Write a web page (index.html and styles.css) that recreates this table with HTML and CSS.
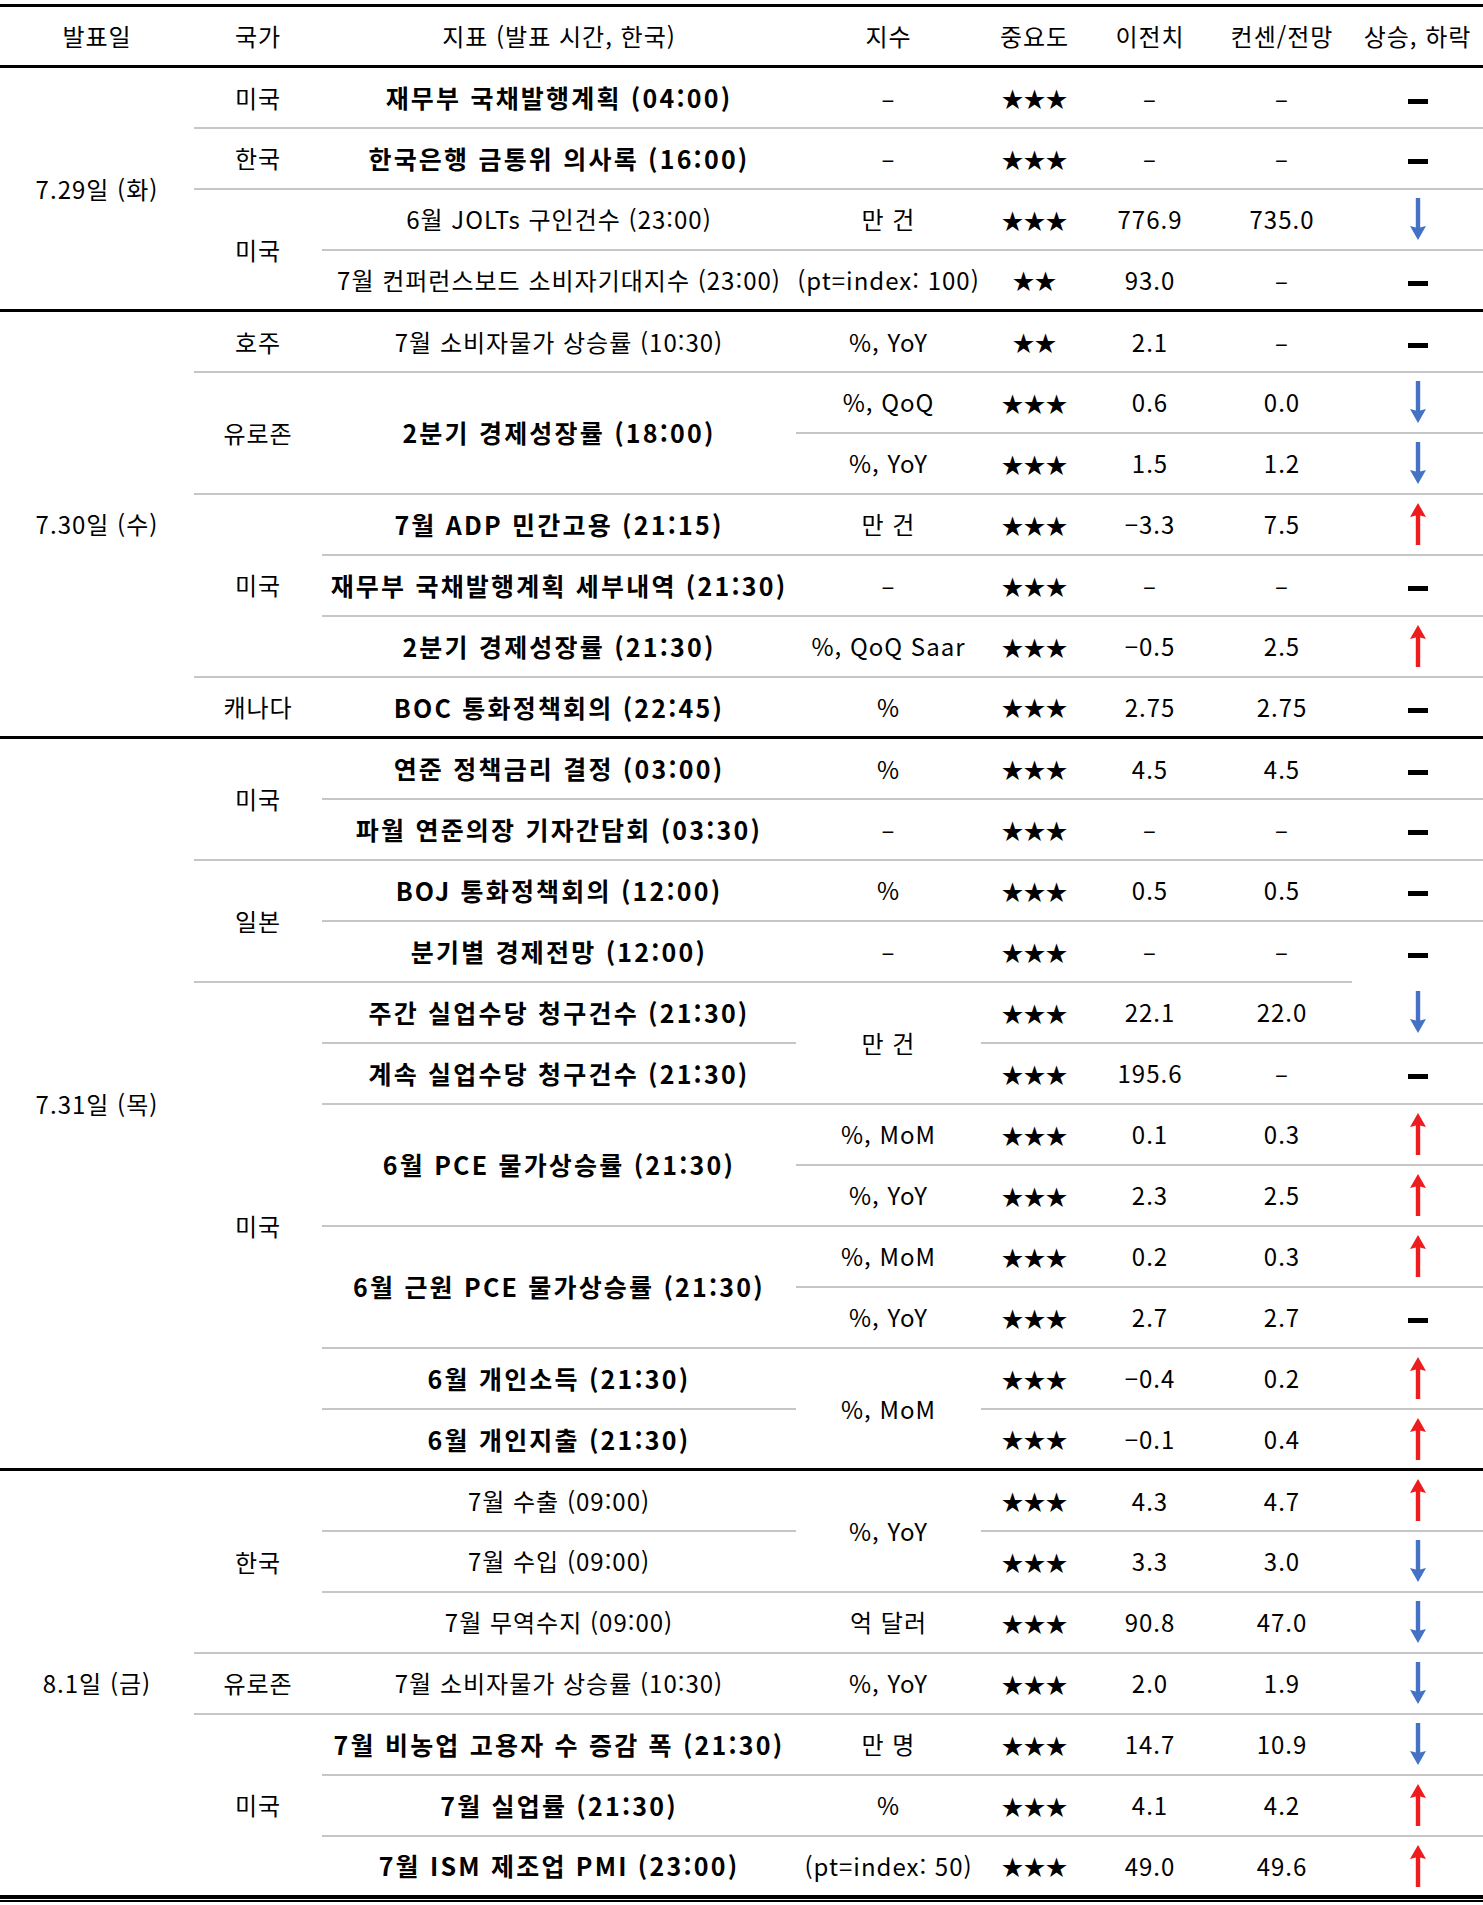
FILE: index.html
```html
<!DOCTYPE html>
<html lang="ko">
<head>
<meta charset="utf-8">
<title>주요 경제지표 발표 일정</title>
<link rel="stylesheet" href="styles.css">
</head>
<body>
<svg class="defs" width="0" height="0" aria-hidden="true">
  <defs>
    <symbol id="up" viewBox="0 0 18 42">
      <rect x="6.8" y="11" width="4.4" height="31" fill="#ee1c1c"/>
      <polygon points="9,0 17,14 9,12 1,14" fill="#ee1c1c"/>
    </symbol>
    <symbol id="down" viewBox="0 0 18 42">
      <rect x="6.8" y="0" width="4.4" height="31" fill="#4472c4"/>
      <polygon points="9,42 17,28 9,30 1,28" fill="#4472c4"/>
    </symbol>
  </defs>
</svg>
<div class="wrap">
<table class="cal">
  <colgroup>
    <col class="c-date"><col class="c-cty"><col class="c-ind"><col class="c-unit">
    <col class="c-imp"><col class="c-prev"><col class="c-cons"><col class="c-dir">
  </colgroup>
  <thead>
    <tr>
      <th>발표일</th><th>국가</th><th>지표 (발표 시간, 한국)</th><th>지수</th>
      <th>중요도</th><th>이전치</th><th>컨센/전망</th><th>상승, 하락</th>
    </tr>
  </thead>
  <tbody>
    <tr>
      <td rowspan="4">7.29일 (화)</td>
      <td>미국</td><td class="b">재무부 국채발행계획 (04:00)</td><td>–</td><td class="star">★★★</td><td>–</td><td>–</td><td><span class="flat"></span></td>
    </tr>
    <tr>
      <td>한국</td><td class="b">한국은행 금통위 의사록 (16:00)</td><td>–</td><td class="star">★★★</td><td>–</td><td>–</td><td><span class="flat"></span></td>
    </tr>
    <tr>
      <td rowspan="2">미국</td><td>6월 JOLTs 구인건수 (23:00)</td><td>만 건</td><td class="star">★★★</td><td>776.9</td><td>735.0</td><td><svg class="arr"><use href="#down"/></svg></td>
    </tr>
    <tr>
      <td>7월 컨퍼런스보드 소비자기대지수 (23:00)</td><td>(pt=index: 100)</td><td class="star">★★</td><td>93.0</td><td>–</td><td><span class="flat"></span></td>
    </tr>
  </tbody>
  <tbody>
    <tr>
      <td rowspan="7">7.30일 (수)</td>
      <td>호주</td><td>7월 소비자물가 상승률 (10:30)</td><td>%, YoY</td><td class="star">★★</td><td>2.1</td><td>–</td><td><span class="flat"></span></td>
    </tr>
    <tr>
      <td rowspan="2">유로존</td><td rowspan="2" class="b">2분기 경제성장률 (18:00)</td><td>%, QoQ</td><td class="star">★★★</td><td>0.6</td><td>0.0</td><td><svg class="arr"><use href="#down"/></svg></td>
    </tr>
    <tr>
      <td>%, YoY</td><td class="star">★★★</td><td>1.5</td><td>1.2</td><td><svg class="arr"><use href="#down"/></svg></td>
    </tr>
    <tr>
      <td rowspan="3">미국</td><td class="b">7월 ADP 민간고용 (21:15)</td><td>만 건</td><td class="star">★★★</td><td>−3.3</td><td>7.5</td><td><svg class="arr"><use href="#up"/></svg></td>
    </tr>
    <tr>
      <td class="b">재무부 국채발행계획 세부내역 (21:30)</td><td>–</td><td class="star">★★★</td><td>–</td><td>–</td><td><span class="flat"></span></td>
    </tr>
    <tr>
      <td class="b">2분기 경제성장률 (21:30)</td><td>%, QoQ Saar</td><td class="star">★★★</td><td>−0.5</td><td>2.5</td><td><svg class="arr"><use href="#up"/></svg></td>
    </tr>
    <tr>
      <td>캐나다</td><td class="b">BOC 통화정책회의 (22:45)</td><td>%</td><td class="star">★★★</td><td>2.75</td><td>2.75</td><td><span class="flat"></span></td>
    </tr>
  </tbody>
  <tbody>
    <tr>
      <td rowspan="12">7.31일 (목)</td>
      <td rowspan="2">미국</td><td class="b">연준 정책금리 결정 (03:00)</td><td>%</td><td class="star">★★★</td><td>4.5</td><td>4.5</td><td><span class="flat"></span></td>
    </tr>
    <tr>
      <td class="b">파월 연준의장 기자간담회 (03:30)</td><td>–</td><td class="star">★★★</td><td>–</td><td>–</td><td><span class="flat"></span></td>
    </tr>
    <tr>
      <td rowspan="2">일본</td><td class="b">BOJ 통화정책회의 (12:00)</td><td>%</td><td class="star">★★★</td><td>0.5</td><td>0.5</td><td><span class="flat"></span></td>
    </tr>
    <tr>
      <td class="b">분기별 경제전망 (12:00)</td><td>–</td><td class="star">★★★</td><td>–</td><td>–</td><td class="nob"><span class="flat"></span></td>
    </tr>
    <tr>
      <td rowspan="8">미국</td><td class="b">주간 실업수당 청구건수 (21:30)</td><td rowspan="2">만 건</td><td class="star">★★★</td><td>22.1</td><td>22.0</td><td><svg class="arr"><use href="#down"/></svg></td>
    </tr>
    <tr>
      <td class="b">계속 실업수당 청구건수 (21:30)</td><td class="star">★★★</td><td>195.6</td><td>–</td><td><span class="flat"></span></td>
    </tr>
    <tr>
      <td rowspan="2" class="b">6월 PCE 물가상승률 (21:30)</td><td>%, MoM</td><td class="star">★★★</td><td>0.1</td><td>0.3</td><td><svg class="arr"><use href="#up"/></svg></td>
    </tr>
    <tr>
      <td>%, YoY</td><td class="star">★★★</td><td>2.3</td><td>2.5</td><td><svg class="arr"><use href="#up"/></svg></td>
    </tr>
    <tr>
      <td rowspan="2" class="b">6월 근원 PCE 물가상승률 (21:30)</td><td>%, MoM</td><td class="star">★★★</td><td>0.2</td><td>0.3</td><td><svg class="arr"><use href="#up"/></svg></td>
    </tr>
    <tr>
      <td>%, YoY</td><td class="star">★★★</td><td>2.7</td><td>2.7</td><td><span class="flat"></span></td>
    </tr>
    <tr>
      <td class="b">6월 개인소득 (21:30)</td><td rowspan="2">%, MoM</td><td class="star">★★★</td><td>−0.4</td><td>0.2</td><td><svg class="arr"><use href="#up"/></svg></td>
    </tr>
    <tr>
      <td class="b">6월 개인지출 (21:30)</td><td class="star">★★★</td><td>−0.1</td><td>0.4</td><td><svg class="arr"><use href="#up"/></svg></td>
    </tr>
  </tbody>
  <tbody class="lastgrp">
    <tr>
      <td rowspan="7">8.1일 (금)</td>
      <td rowspan="3">한국</td><td>7월 수출 (09:00)</td><td rowspan="2">%, YoY</td><td class="star">★★★</td><td>4.3</td><td>4.7</td><td><svg class="arr"><use href="#up"/></svg></td>
    </tr>
    <tr>
      <td>7월 수입 (09:00)</td><td class="star">★★★</td><td>3.3</td><td>3.0</td><td><svg class="arr"><use href="#down"/></svg></td>
    </tr>
    <tr>
      <td>7월 무역수지 (09:00)</td><td>억 달러</td><td class="star">★★★</td><td>90.8</td><td>47.0</td><td><svg class="arr"><use href="#down"/></svg></td>
    </tr>
    <tr>
      <td>유로존</td><td>7월 소비자물가 상승률 (10:30)</td><td>%, YoY</td><td class="star">★★★</td><td>2.0</td><td>1.9</td><td><svg class="arr"><use href="#down"/></svg></td>
    </tr>
    <tr>
      <td rowspan="3">미국</td><td class="b">7월 비농업 고용자 수 증감 폭 (21:30)</td><td>만 명</td><td class="star">★★★</td><td>14.7</td><td>10.9</td><td><svg class="arr"><use href="#down"/></svg></td>
    </tr>
    <tr>
      <td class="b">7월 실업률 (21:30)</td><td>%</td><td class="star">★★★</td><td>4.1</td><td>4.2</td><td><svg class="arr"><use href="#up"/></svg></td>
    </tr>
    <tr>
      <td class="b">7월 ISM 제조업 PMI (23:00)</td><td>(pt=index: 50)</td><td class="star">★★★</td><td>49.0</td><td>49.6</td><td><svg class="arr"><use href="#up"/></svg></td>
    </tr>
  </tbody>
</table>
</div>
</body>
</html>
```

FILE: styles.css
```css
html, body {
  margin: 0;
  padding: 0;
  background: #ffffff;
}

.defs {
  position: absolute;
  width: 0;
  height: 0;
  overflow: hidden;
}

.wrap {
  width: 1483px;
  padding-top: 4px;
  padding-bottom: 1px;
  border-bottom: 2px solid #000;
}

.cal {
  width: 1483px;
  border-collapse: collapse;
  table-layout: fixed;
  font-family: "Noto Sans CJK KR", "Noto Sans", sans-serif;
  font-size: 24px;
  letter-spacing: 1px;
  color: #000;
}

.c-date { width: 194px; }
.c-cty  { width: 128px; }
.c-ind  { width: 474px; }
.c-unit { width: 185px; }
.c-imp  { width: 107px; }
.c-prev { width: 124px; }
.c-cons { width: 140px; }
.c-dir  { width: 131px; }

.cal th,
.cal td {
  padding: 0;
  text-align: center;
  vertical-align: middle;
  white-space: nowrap;
  line-height: 1.3;
}

.cal thead tr {
  height: 61px;
}

.cal th {
  font-weight: 400;
  border-top: 3px solid #000;
  border-bottom: 3px solid #000;
}

.cal tbody tr {
  height: 61px;
}

.cal td {
  border-bottom: 2px solid #c6c6c6;
}

.cal tbody {
  border-bottom: 3px solid #000;
}

.cal tbody.lastgrp {
  border-bottom: 4px solid #000;
}

.cal td.nob {
  border-bottom: none;
}

.b {
  font-size: 25px;
  font-weight: 700;
  letter-spacing: 2.2px;
}

.star {
  font-size: 22px;
  letter-spacing: 0;
}

.flat {
  display: inline-block;
  width: 20px;
  height: 5px;
  background: #000;
  vertical-align: middle;
}

.arr {
  display: block;
  width: 18px;
  height: 42px;
  margin: 0 auto;
}
```
